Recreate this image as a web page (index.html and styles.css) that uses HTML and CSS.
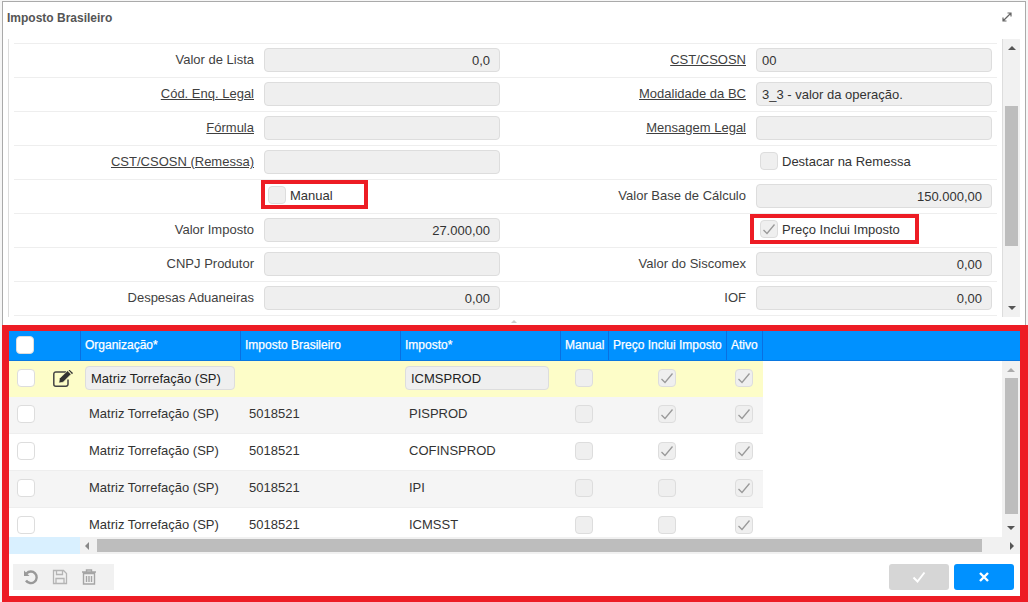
FILE: index.html
```html
<!DOCTYPE html>
<html lang="pt">
<head>
<meta charset="utf-8">
<title>Imposto Brasileiro</title>
<link rel="stylesheet" href="styles.css">
</head>
<body>
<div class="dialog">
  <header class="title-bar">
    <span class="title">Imposto Brasileiro</span>
    <svg class="expand" width="10" height="10" viewBox="0 0 10 10"><path d="M1 9 9 1M5.500 1H9V4.500M1 5.500V9H4.500" fill="none" stroke="#666" stroke-width="1.200"/></svg>
  </header>
  <section class="form-area">
    <div class="form">
      <div class="row">
        <div class="cell"><span class="lbl">Valor de Lista</span><span class="inp num">0,0</span></div>
        <div class="cell"><span class="lbl link">CST/CSOSN</span><span class="inp">00</span></div>
      </div>
      <div class="row">
        <div class="cell"><span class="lbl link">Cód. Enq. Legal</span><span class="inp"></span></div>
        <div class="cell"><span class="lbl link">Modalidade da BC</span><span class="inp">3_3 - valor da operação.</span></div>
      </div>
      <div class="row">
        <div class="cell"><span class="lbl link">Fórmula</span><span class="inp"></span></div>
        <div class="cell"><span class="lbl link">Mensagem Legal</span><span class="inp"></span></div>
      </div>
      <div class="row">
        <div class="cell"><span class="lbl link">CST/CSOSN (Remessa)</span><span class="inp"></span></div>
        <div class="cell"><span class="lbl"></span><span class="chk-wrap"><span class="cb"></span>Destacar na Remessa</span></div>
      </div>
      <div class="row">
        <div class="cell"><span class="lbl"></span><span class="chk-wrap"><span class="cb"></span>Manual<span class="mark mark-manual"></span></span></div>
        <div class="cell"><span class="lbl">Valor Base de Cálculo</span><span class="inp num">150.000,00</span></div>
      </div>
      <div class="row">
        <div class="cell"><span class="lbl">Valor Imposto</span><span class="inp num">27.000,00</span></div>
        <div class="cell"><span class="lbl"></span><span class="chk-wrap"><span class="cb"><svg viewBox="0 0 16 16"><path d="M2.500 9 6 12.500 13.500 3.500" fill="none" stroke="#999" stroke-width="1.300"/></svg></span>Preço Inclui Imposto<span class="mark mark-preco"></span></span></div>
      </div>
      <div class="row">
        <div class="cell"><span class="lbl">CNPJ Produtor</span><span class="inp"></span></div>
        <div class="cell"><span class="lbl">Valor do Siscomex</span><span class="inp num">0,00</span></div>
      </div>
      <div class="row">
        <div class="cell"><span class="lbl">Despesas Aduaneiras</span><span class="inp num">0,00</span></div>
        <div class="cell"><span class="lbl">IOF</span><span class="inp num">0,00</span></div>
      </div>
    </div>
    <div class="vscroll form-scroll">
      <span class="arrow up"></span>
      <div class="track"><span class="thumb"></span></div>
      <span class="arrow down"></span>
    </div>
  </section>
  <div class="splitter"><span class="grip"></span></div>
  <section class="grid-frame">
    <div class="grid-head">
      <div class="hc c-sel"><span class="cb head-cb"></span></div>
      <div class="hc c-org">Organização*</div>
      <div class="hc c-imb">Imposto Brasileiro</div>
      <div class="hc c-imp">Imposto*</div>
      <div class="hc c-man">Manual</div>
      <div class="hc c-pre">Preço Inclui Imposto</div>
      <div class="hc c-ati">Ativo</div>
    </div>
    <div class="grid-body">
      <div class="rows">
        <div class="gr editing">
          <div class="gc c-sel"><span class="cb white"></span><svg class="edit" width="21" height="17" viewBox="0 0 21 17"><path d="M15 9.500v4.700a2 2 0 0 1-2 2H2.800a2 2 0 0 1-2-2V4a2 2 0 0 1 2-2H13" fill="none" stroke="#444" stroke-width="1.500"/><path d="M6.500 8.500 14.500 .8l3.600 3.400-8 8-4.200 .8z" fill="#333" stroke="#fdfdc8" stroke-width=".6"/><path d="M15.500 0l1-.2 3.500 3.200-1 1.200z" fill="#333"/></svg></div>
          <div class="gc c-org"><span class="ed ed-org">Matriz Torrefação (SP)</span></div>
          <div class="gc c-imb"></div>
          <div class="gc c-imp"><span class="ed ed-imp">ICMSPROD</span></div>
          <div class="gc c-man"><span class="cb"></span></div>
          <div class="gc c-pre"><span class="cb"><svg viewBox="0 0 16 16"><path d="M2.500 9 6 12.500 13.500 3.500" fill="none" stroke="#999" stroke-width="1.300"/></svg></span></div>
          <div class="gc c-ati"><span class="cb"><svg viewBox="0 0 16 16"><path d="M2.500 9 6 12.500 13.500 3.500" fill="none" stroke="#999" stroke-width="1.300"/></svg></span></div>
        </div>
        <div class="gr alt">
          <div class="gc c-sel"><span class="cb white"></span></div>
          <div class="gc c-org txt">Matriz Torrefação (SP)</div>
          <div class="gc c-imb txt">5018521</div>
          <div class="gc c-imp txt">PISPROD</div>
          <div class="gc c-man"><span class="cb"></span></div>
          <div class="gc c-pre"><span class="cb"><svg viewBox="0 0 16 16"><path d="M2.500 9 6 12.500 13.500 3.500" fill="none" stroke="#999" stroke-width="1.300"/></svg></span></div>
          <div class="gc c-ati"><span class="cb"><svg viewBox="0 0 16 16"><path d="M2.500 9 6 12.500 13.500 3.500" fill="none" stroke="#999" stroke-width="1.300"/></svg></span></div>
        </div>
        <div class="gr">
          <div class="gc c-sel"><span class="cb white"></span></div>
          <div class="gc c-org txt">Matriz Torrefação (SP)</div>
          <div class="gc c-imb txt">5018521</div>
          <div class="gc c-imp txt">COFINSPROD</div>
          <div class="gc c-man"><span class="cb"></span></div>
          <div class="gc c-pre"><span class="cb"><svg viewBox="0 0 16 16"><path d="M2.500 9 6 12.500 13.500 3.500" fill="none" stroke="#999" stroke-width="1.300"/></svg></span></div>
          <div class="gc c-ati"><span class="cb"><svg viewBox="0 0 16 16"><path d="M2.500 9 6 12.500 13.500 3.500" fill="none" stroke="#999" stroke-width="1.300"/></svg></span></div>
        </div>
        <div class="gr alt">
          <div class="gc c-sel"><span class="cb white"></span></div>
          <div class="gc c-org txt">Matriz Torrefação (SP)</div>
          <div class="gc c-imb txt">5018521</div>
          <div class="gc c-imp txt">IPI</div>
          <div class="gc c-man"><span class="cb"></span></div>
          <div class="gc c-pre"><span class="cb"></span></div>
          <div class="gc c-ati"><span class="cb"><svg viewBox="0 0 16 16"><path d="M2.500 9 6 12.500 13.500 3.500" fill="none" stroke="#999" stroke-width="1.300"/></svg></span></div>
        </div>
        <div class="gr">
          <div class="gc c-sel"><span class="cb white"></span></div>
          <div class="gc c-org txt">Matriz Torrefação (SP)</div>
          <div class="gc c-imb txt">5018521</div>
          <div class="gc c-imp txt">ICMSST</div>
          <div class="gc c-man"><span class="cb"></span></div>
          <div class="gc c-pre"><span class="cb"></span></div>
          <div class="gc c-ati"><span class="cb"><svg viewBox="0 0 16 16"><path d="M2.500 9 6 12.500 13.500 3.500" fill="none" stroke="#999" stroke-width="1.300"/></svg></span></div>
        </div>
      </div>
      <div class="vscroll grid-scroll">
        <span class="arrow up"></span>
        <div class="track"><span class="thumb"></span></div>
        <span class="arrow down"></span>
      </div>
    </div>
    <div class="grid-foot">
      <div class="foot-sel"></div>
      <div class="hscroll">
        <span class="arrow left"></span>
        <div class="htrack"><span class="hthumb"></span></div>
        <span class="arrow right"></span>
      </div>
    </div>
    <div class="actions">
      <div class="tools">
        <svg width="16" height="16" viewBox="0 0 16 16"><path d="M3.500 4.500A5.800 5.800 0 1 1 3 11.500" fill="none" stroke="#999" stroke-width="2.400"/><path d="M1 1.500v5.500h5.500z" fill="#999"/></svg>
        <svg width="16" height="16" viewBox="0 0 16 16"><path d="M1.500 1.500h10l3 3v10h-13zM4.500 1.500v4h6v-4M4 14.500v-5h8v5" fill="none" stroke="#b4b4b4" stroke-width="1.300"/></svg>
        <svg width="16" height="16" viewBox="0 0 16 16"><path d="M2.500 4.500h11v10.500h-11zM1 3h14M5.500 3V1h5v2M5.500 7v6M8 7v6M10.500 7v6" fill="none" stroke="#a5a5a5" stroke-width="1.400"/></svg>
      </div>
      <div class="buttons">
        <button class="btn ok"><svg width="14" height="12" viewBox="0 0 14 12"><path d="M1.500 6.500 5.500 10.500 12.500 1.500" fill="none" stroke="#fff" stroke-width="2"/></svg></button>
        <button class="btn cancel"><svg width="12" height="12" viewBox="0 0 12 12"><path d="M2 2 10 10M10 2 2 10" fill="none" stroke="#fff" stroke-width="2.400"/></svg></button>
      </div>
    </div>
  </section>
</div>
</body>
</html>
```
FILE: styles.css
```css
* { box-sizing: border-box; }
html, body { margin: 0; height: 100%; }
body {
  width: 1028px;
  height: 602px;
  overflow: hidden;
  background: #f6f6f6;
  font-family: "Liberation Sans", Arial, sans-serif;
  font-size: 13px;
  color: #333;
  padding: 1px 0 0 2px;
}
.dialog {
  width: 1024px;
  height: 601px;
  background: #fff;
  border-top: 1px solid #aaa;
  border-left: 1px solid #aaa;
  border-right: 1px solid #aaa;
  display: flex;
  flex-direction: column;
}
.title-bar {
  height: 37px;
  flex: none;
  display: flex;
  justify-content: space-between;
  padding: 9px 13px 0 4px;
}
.title { font-weight: 700; font-size: 12px; color: #555; }
.expand { margin-top: 1px; }
.form-area {
  height: 278px;
  flex: none;
  display: flex;
  margin-left: 5px;
  margin-right: 5px;
  border-left: 1px solid #ddd;
}
.form { width: 983px; margin-left: 5px; margin-top: 4px; border-top: 1px solid #eee; flex: none; }
.row { height: 34px; display: flex; border-bottom: 1px solid #eee; }
.cell { width: 492px; flex: none; display: flex; align-items: center; padding-bottom: 1px; }
.lbl { width: 240px; text-align: right; color: #3f3f3f; flex: none; margin-bottom: 2px; }
.row .lbl.link { text-decoration: underline; }
.lbl:empty { visibility: hidden; }
.inp {
  width: 236px;
  height: 24px;
  margin-left: 10px;
  background: #efefef;
  border: 1px solid #ddd;
  border-radius: 4px;
  padding: 0 5px;
  line-height: 23px;
  flex: none;
}
.num { text-align: right; padding-right: 9px; }
.chk-wrap {
  position: relative;
  margin-left: 14px;
  margin-bottom: 2px;
  display: flex;
  align-items: center;
  gap: 4px;
}
.cb {
  display: inline-block;
  width: 18px;
  height: 18px;
  flex: none;
  background: #efefef;
  border: 1px solid #ddd;
  border-radius: 4px;
  line-height: 0;
}
.cb svg { width: 16px; height: 16px; }
.cb.white, .head-cb { background: #fff; }
.mark { position: absolute; border: 4px solid #ed1c24; pointer-events: none; }
.mark-manual { left: -7px; top: -6px; width: 107px; height: 29px; }
.mark-preco { left: -10px; top: -6px; width: 169px; height: 30px; }
.vscroll {
  width: 18px;
  flex: none;
  background: #f1f1f1;
  display: flex;
  flex-direction: column;
  align-items: center;
}
.form-scroll { margin-left: 5px; height: 278px; border-left: 1px solid #ddd; }
.arrow { width: 0; height: 0; flex: none; border: 4px solid transparent; }
.arrow.up { border-bottom-color: #555; border-top-width: 0; margin: 7px 0 5px; }
.arrow.down { border-top-color: #555; border-bottom-width: 0; margin: 5px 0 7px; }
.grid-scroll .arrow.up { border-bottom-color: #aaa; }
.arrow.left { border-right-color: #888; border-left-width: 0; margin-left: 5px; }
.arrow.right { border-left-color: #555; border-right-width: 0; margin-right: 6px; }
.track { flex: 1; width: 100%; display: flex; flex-direction: column; align-items: center; }
.form-scroll .thumb { display: block; width: 13px; height: 140px; margin-top: 51px; background: #bdbdbd; }
.grid-scroll .thumb { display: block; width: 13px; height: 136px; margin-top: 1px; background: #bdbdbd; }
.splitter { height: 8px; flex: none; display: flex; justify-content: center; }
.grip { width: 0; height: 0; margin-top: 3px; border: 3px solid transparent; border-top-width: 0; border-bottom-color: #ccc; }
.grid-frame {
  flex: 1;
  margin: 0 -1px;
  width: 1026px;
  border-style: solid;
  border-color: #ed1c24;
  border-width: 6px 8px 6px 7px;
  display: flex;
  flex-direction: column;
  background: #fff;
}
.grid-head { height: 30px; flex: none; display: flex; background: #0091ff; border-bottom: 1px solid #0a78e0; color: #fff; font-size: 12px; -webkit-text-stroke: .25px #fff; }
.hc { height: 29px; display: flex; align-items: center; padding: 0 0 2px 4px; border-right: 1px solid #0a6fe0; white-space: nowrap; }
.c-sel { width: 72px; flex: none; }
.c-org { width: 160px; flex: none; }
.c-imb { width: 160px; flex: none; }
.c-imp { width: 160px; flex: none; }
.c-man { width: 48px; flex: none; }
.c-pre { width: 118px; flex: none; }
.c-ati { width: 36px; flex: none; }
.hc.c-sel { padding-left: 0; }
.head-cb { margin-left: 7px; }
.grid-body { height: 176px; flex: none; display: flex; }
.rows { width: 993px; flex: none; overflow: hidden; }
.gr { height: 37px; display: flex; }
.gr.editing { height: 36px; }
.gc { height: 100%; display: flex; align-items: flex-start; padding-top: 8px; border-bottom: 1px solid #eee; }
.gr .c-sel { padding-left: 8px; }
.editing .gc { background: #fdfdc8; border-bottom: 0; }
.alt .gc { background: #f5f5f5; }
.gr .c-man, .gr .c-pre, .gr .c-ati { justify-content: center; padding-right: 2px; }
.gr .txt { padding-left: 8px; padding-top: 9px; line-height: 16px; }
.ed { display: block; margin-top: -3px; background: #efefef; border: 1px solid #ddd; border-radius: 4px; height: 24px; line-height: 23px; color: #222; }
.ed-org { margin-left: 4px; width: 150px; padding-left: 5px; }
.ed-imp { margin-left: 4px; width: 144px; padding-left: 5px; }
.edit { margin: 1px 0 0 18px; flex: none; }
.grid-foot { height: 17px; flex: none; display: flex; }
.foot-sel { width: 71px; flex: none; background: #d9f0ff; }
.hscroll { flex: 1; background: #f1f1f1; display: flex; align-items: center; }
.htrack { flex: 1; display: flex; align-items: center; }
.hthumb { display: block; width: 885px; height: 13px; margin-left: 8px; background: #bdbdbd; }
.actions { flex: 1; display: flex; justify-content: space-between; align-items: flex-start; padding: 10px 6px 0 4px; }
.tools { width: 101px; height: 26px; background: #f1f1f1; display: flex; align-items: center; gap: 13px; padding-left: 10px; }
.buttons { display: flex; gap: 5px; }
.btn { width: 60px; height: 26px; border: 0; border-radius: 3px; padding: 0; display: flex; align-items: center; justify-content: center; }
.ok { background: #d6d6d6; }
.cancel { background: #0091ff; }
```
